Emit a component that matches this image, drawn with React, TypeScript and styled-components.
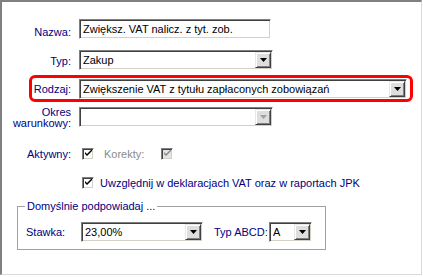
import React from 'react';
import styled, { createGlobalStyle } from 'styled-components';

const GlobalStyle = createGlobalStyle`
    html, body {
        margin: 0;
        padding: 0;
        background: #fff;
    }
    body {
        font-family: "Liberation Sans", Arial, sans-serif;
        font-size: 11px;
    }
`;

const Frame = styled.div`
    box-sizing: border-box;
    width: 422px;
    height: 275px;
    background: #fff;
    border-style: solid;
    border-width: 2px 1px 1px 2px;
    border-color: #808080 #d9d9d9 #d9d9d9 #808080;
    padding-top: 17px;
    display: flex;
    flex-direction: column;
`;

const Row = styled.div<{ $gap?: number; $highlight?: boolean; $height?: number }>`
    position: relative;
    display: grid;
    grid-template-columns: 69px auto;
    column-gap: 8px;
    align-items: center;
    justify-items: start;
    height: ${(p) => p.$height ?? 20}px;
    margin-top: ${(p) => p.$gap ?? 0}px;

    ${(p) =>
        p.$highlight &&
        `
        &::before {
            content: '';
            position: absolute;
            left: 27px;
            right: 8px;
            top: -4px;
            bottom: -3px;
            border: 3px solid #ff0000;
            border-radius: 6px;
            pointer-events: none;
        }
    `}
`;

const Label = styled.div<{ $shift?: number; $top?: boolean }>`
    justify-self: end;
    align-self: ${(p) => (p.$top ? 'start' : 'center')};
    color: #000080;
    text-align: right;
    line-height: ${(p) => (p.$top ? 11 : 12)}px;
    white-space: nowrap;
    position: relative;
    top: ${(p) => p.$shift ?? 0}px;
`;

const Field = styled.div<{ $width: number; $disabled?: boolean; $alignTop?: boolean }>`
    box-sizing: border-box;
    width: ${(p) => p.$width}px;
    height: 20px;
    align-self: ${(p) => (p.$alignTop ? 'start' : 'center')};
    display: flex;
    align-items: center;
    background: #fff;
    border: 1px solid;
    border-color: #808080 #ffffff #ffffff #808080;
    box-shadow: inset 1px 1px #404040, inset -1px -1px #d4d0c8;
    padding: 2px 2px 2px 3px;
    color: ${(p) => (p.$disabled ? '#808080' : '#000')};
    white-space: nowrap;
    overflow: hidden;
`;

const FieldText = styled.span`
    flex: 1;
    line-height: 12px;
    overflow: hidden;
`;

const DropButton = styled.div`
    box-sizing: border-box;
    width: 16px;
    height: 16px;
    margin-right: -1px;
    flex: none;
    display: flex;
    align-items: center;
    justify-content: center;
    background: #dedede;
    border: 1px solid;
    border-color: #e8e8e8 #404040 #404040 #e8e8e8;
    box-shadow: inset 1px 1px #ffffff, inset -1px -1px #808080;
`;

const Arrow = ({ color }: { color: string }) => (
    <svg width="7" height="4" viewBox="0 0 7 4">
        <polygon points="0,0 7,0 3.5,4" fill={color} />
    </svg>
);

const Combo = ({
    width,
    value = '',
    disabled,
    alignTop,
}: {
    width: number;
    value?: string;
    disabled?: boolean;
    alignTop?: boolean;
}) => (
    <Field $width={width} $disabled={disabled} $alignTop={alignTop}>
        <FieldText>{value}</FieldText>
        <DropButton>
            <Arrow color={disabled ? '#a0a0a0' : '#000'} />
        </DropButton>
    </Field>
);

const Controls = styled.div<{ $gap?: number }>`
    display: flex;
    align-items: center;
    gap: ${(p) => p.$gap ?? 8}px;
`;

const CheckBox = styled.div<{ $disabled?: boolean; $indent?: number }>`
    box-sizing: border-box;
    width: 12px;
    height: 12px;
    margin-left: ${(p) => p.$indent ?? 0}px;
    flex: none;
    display: flex;
    align-items: center;
    justify-content: center;
    background: ${(p) => (p.$disabled ? '#e4e4e4' : '#fff')};
    border: 1px solid;
    border-color: #808080 #ffffff #ffffff #808080;
    box-shadow: inset 1px 1px #404040, inset -1px -1px #d4d0c8;
`;

const Check = ({ color }: { color: string }) => (
    <svg width="7" height="7" viewBox="0 0 7 7">
        <path d="M0 2 L2 4 L7 -1 L7 1 L2 6 L0 4 Z" fill={color} />
    </svg>
);

const CheckText = styled.span<{ $disabled?: boolean }>`
    color: ${(p) => (p.$disabled ? '#8a8a8a' : '#000080')};
    line-height: 12px;
    white-space: nowrap;
`;

const GroupBox = styled.fieldset`
    box-sizing: border-box;
    width: 309px;
    margin: 11px 0 0 15px;
    padding: 10px 8px 7px 8px;
    border: 1px solid #a0a0a0;
    min-width: 0;
`;

const GroupTitle = styled.legend`
    color: #000080;
    line-height: 12px;
    padding: 0 2px;
    margin-left: -1px;
`;

const GroupRow = styled.div`
    display: flex;
    align-items: center;
    height: 20px;
`;

const GroupLabel = styled.span<{ $width: number; $indent?: number }>`
    width: ${(p) => p.$width}px;
    margin-left: ${(p) => p.$indent ?? 0}px;
    flex: none;
    color: #000080;
    line-height: 12px;
    white-space: nowrap;
`;

export default function App() {
    return (
        <>
            <GlobalStyle />
            <Frame>
                <Row>
                    <Label $shift={3}>Nazwa:</Label>
                    <Field $width={192}>
                        <FieldText>Zwiększ. VAT nalicz. z tyt. zob.</FieldText>
                    </Field>
                </Row>
                <Row $gap={11}>
                    <Label $shift={1}>Typ:</Label>
                    <Combo width={194} value="Zakup" />
                </Row>
                <Row $gap={9} $highlight>
                    <Label>Rodzaj:</Label>
                    <Combo width={328} value="Zwiększenie VAT z tytułu zapłaconych zobowiązań" />
                </Row>
                <Row $gap={8} $height={22}>
                    <Label $top>
                        Okres
                        <br />
                        warunkowy:
                    </Label>
                    <Combo width={194} disabled alignTop />
                </Row>
                <Row $gap={18} $height={13}>
                    <Label>Aktywny:</Label>
                    <Controls $gap={10}>
                        <CheckBox $indent={3}>
                            <Check color="#000" />
                        </CheckBox>
                        <CheckText $disabled>Korekty:</CheckText>
                        <CheckBox $disabled $indent={7}>
                            <Check color="#8a8a8a" />
                        </CheckBox>
                    </Controls>
                </Row>
                <Row $gap={16} $height={13}>
                    <span />
                    <Controls $gap={6}>
                        <CheckBox $indent={3}>
                            <Check color="#000" />
                        </CheckBox>
                        <CheckText>Uwzględnij w deklaracjach VAT oraz w raportach JPK</CheckText>
                    </Controls>
                </Row>
                <GroupBox>
                    <GroupTitle>Domyślnie podpowiadaj ...</GroupTitle>
                    <GroupRow>
                        <GroupLabel $width={55}>Stawka:</GroupLabel>
                        <Combo width={122} value="23,00%" />
                        <GroupLabel $width={55} $indent={11}>
                            Typ ABCD:
                        </GroupLabel>
                        <Combo width={43} value="A" />
                    </GroupRow>
                </GroupBox>
            </Frame>
        </>
    );
}
